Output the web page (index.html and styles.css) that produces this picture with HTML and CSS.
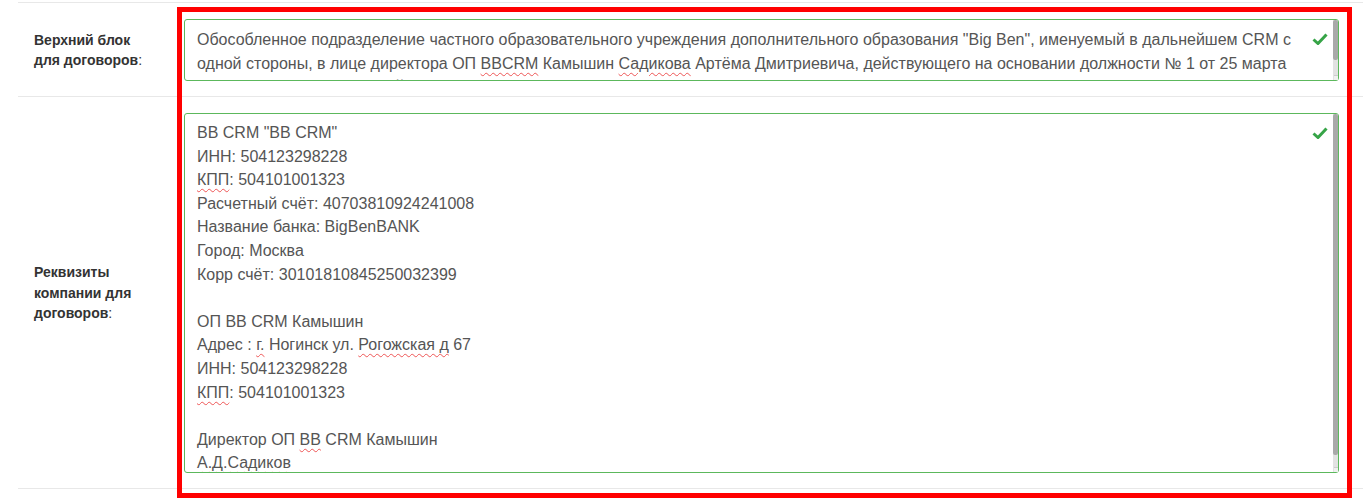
FILE: index.html
```html
<!DOCTYPE html>
<html lang="ru">
<head>
<meta charset="utf-8">
<link rel="stylesheet" href="styles.css">
</head>
<body>
<div class="page">
  <div class="form">
    <div class="row">
      <div class="label">Верхний блок<br>для договоров<span class="colon">:</span></div>
      <div class="field">
        <div class="area area-top">Обособленное подразделение частного образовательного учреждения дополнительного образования "Big Ben", именуемый в дальнейшем CRM с
одной стороны, в лице директора ОП <span class="sp">ВВCRM</span> Камышин <span class="sp">Садикова</span> Артёма Дмитриевича, действующего на основании должности № 1 от 25 марта
2019 г., и Заказчик, с другой стороны,
заключили настоящий договор о нижеследующем:</div>
        <div class="scroll scroll-top"><div class="thumb"></div></div>
        <svg class="check" viewBox="0 0 16 12"><path d="M1.5 6.5 L6 10.5 L14.5 1.5" fill="none" stroke="currentColor" stroke-width="3"/></svg>
      </div>
    </div>
    <div class="row">
      <div class="label">Реквизиты<br>компании для<br>договоров<span class="colon">:</span></div>
      <div class="field">
        <div class="area area-big">ВВ CRM "ВВ CRM"
ИНН: 504123298228
<span class="sp">КПП</span>: 504101001323
Расчетный счёт: 40703810924241008
Название банка: BigBenBANK
Город: Москва
Корр счёт: 30101810845250032399

ОП ВВ CRM Камышин
Адрес : <span class="sp">г.</span> Ногинск ул. <span class="sp">Рогожская д</span> 67
ИНН: 504123298228
<span class="sp">КПП</span>: 504101001323

Директор ОП <span class="sp">ВВ</span> CRM Камышин
<span class="sp">А.Д.Садиков</span>
</div>
        <div class="scroll scroll-big"><div class="thumb"></div></div>
        <svg class="check" viewBox="0 0 16 12"><path d="M1.5 6.5 L6 10.5 L14.5 1.5" fill="none" stroke="currentColor" stroke-width="3"/></svg>
      </div>
    </div>
  </div>
  <div class="highlight"></div>
</div>
</body>
</html>
```
FILE: styles.css
```css
html, body {
  margin: 0;
  padding: 0;
  background: #fff;
}
body {
  font-family: "Liberation Sans", Arial, sans-serif;
  color: #555;
}
.page {
  position: relative;
  width: 1363px;
  height: 504px;
  overflow: hidden;
}
.form {
  margin-left: 18px;
  padding-top: 2px;
}
.row {
  display: flex;
  align-items: center;
  border-top: 1px solid #e8e8e8;
  padding: 16px 24px 15px 0;
}
.row:last-child {
  border-bottom: 1px solid #e8e8e8;
}
.label {
  width: 166px;
  flex: none;
  padding-left: 16px;
  box-sizing: border-box;
  font-weight: bold;
  font-size: 14px;
  line-height: 20.5px;
  color: #333;
}
.colon {
  font-weight: normal;
}
.field {
  position: relative;
  flex: 1;
  min-width: 0;
}
.area {
  box-sizing: border-box;
  width: 100%;
  border: 1px solid #5cb85c;
  border-radius: 3px;
  padding: 7px 32px 7px 12px;
  font-size: 16px;
  line-height: 23.6px;
  color: #555;
  white-space: pre;
  overflow: hidden;
}
.area-top {
  height: 62px;
  padding-top: 8px;
}
.area-big {
  height: 360px;
  padding-top: 7px;
}
.scroll {
  position: absolute;
  right: 1px;
  top: 1px;
  width: 5px;
  background: #e2e2e2;
  border-radius: 0 2px 2px 0;
}
.scroll::after {
  content: "";
  position: absolute;
  left: 1px;
  right: 0;
  bottom: 0;
  height: 4px;
  background: #f0f0f0;
  border-top: 1px solid #ccc;
}
.scroll-top {
  height: 60px;
}
.scroll-top .thumb {
  height: 40px;
}
.scroll-big {
  height: 358px;
}
.scroll-big .thumb {
  height: 341px;
}
.thumb {
  background: #a9a9a9;
  border-radius: 2px;
}
.sp {
  text-decoration: underline wavy #e55;
  text-decoration-thickness: 1px;
  text-underline-offset: 3px;
}
.check {
  position: absolute;
  top: 14px;
  right: 11px;
  width: 16px;
  height: 12px;
  color: #36a447;
}
.highlight {
  position: absolute;
  left: 177px;
  top: 7px;
  width: 1175px;
  height: 491px;
  box-sizing: border-box;
  border: 5px solid #ff0000;
  pointer-events: none;
}
```
